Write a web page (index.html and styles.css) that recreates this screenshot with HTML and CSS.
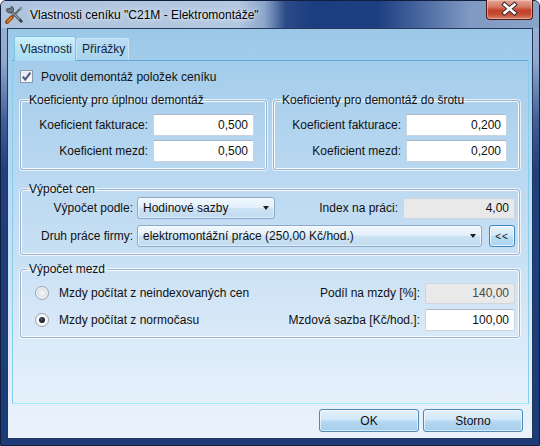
FILE: index.html
```html
<!DOCTYPE html>
<html lang="cs">
<head>
<meta charset="utf-8">
<title>Vlastnosti ceníku</title>
<link rel="stylesheet" href="styles.css">
</head>
<body>
<div class="window">
  <div class="titlebar">
    <svg class="app-icon" width="19" height="19" viewBox="0 0 19 19">
      <path d="M5.5 13.5 L16 3" stroke="#5d6a75" stroke-width="2.2" stroke-linecap="round"/>
      <path d="M15 2.5 L17 4.5" stroke="#8c98a3" stroke-width="2"/>
      <path d="M2 17 L6.8 12.2" stroke="#a04a12" stroke-width="4" stroke-linecap="round"/>
      <path d="M2.6 16.4 L6.4 12.6" stroke="#e08a3a" stroke-width="1.4" stroke-linecap="round"/>
      <path d="M4.5 4.5 L15.5 15.5" stroke="#4e5963" stroke-width="2.6" stroke-linecap="round"/>
      <path d="M4.6 4.4 L15.2 15" stroke="#b9c2ca" stroke-width="1" stroke-linecap="round"/>
      <path d="M1.5 4 A3.6 3.6 0 1 0 6.5 1.2 L5 3.8 L3.6 3.4 Z" fill="#6b7682" stroke="#3c444c" stroke-width="0.8"/>
      <path d="M13.6 15.4 L15.4 13.6 L18 16.2 L16.2 18 Z" fill="#39424a"/>
    </svg>
    <span class="title">Vlastnosti ceníku "C21M - Elektromontáže"</span>
    <div class="close">
      <svg width="47" height="20" viewBox="0 0 47 20">
        <path d="M18.5 5.5 L28.5 14 M28.5 5.5 L18.5 14" stroke="#3a2a2a" stroke-width="4.6" stroke-linecap="square"/>
        <path d="M18.5 5.5 L28.5 14 M28.5 5.5 L18.5 14" stroke="#ffffff" stroke-width="2.6" stroke-linecap="square"/>
      </svg>
    </div>
  </div>

  <div class="client">
    <div class="tabs">
      <div class="tab active">Vlastnosti</div>
      <div class="tab">Přirážky</div>
    </div>

    <div class="panel">
      <div class="check-row">
        <span class="checkbox">
          <svg width="11" height="11" viewBox="0 0 11 11">
            <path d="M1.8 5.6 L4.2 8.6 L9.4 1.6" fill="none" stroke="#4b5d7e" stroke-width="2.1"/>
          </svg>
        </span>
        <span>Povolit demontáž položek ceníku</span>
      </div>

      <div class="coef-row">
        <fieldset class="group coef">
          <legend>Koeficienty pro úplnou demontáž</legend>
          <div class="form-grid">
            <span class="lbl">Koeficient fakturace:</span><span class="input">0,500</span>
            <span class="lbl">Koeficient mezd:</span><span class="input">0,500</span>
          </div>
        </fieldset>
        <fieldset class="group coef">
          <legend>Koeficienty pro demontáž do šrotu</legend>
          <div class="form-grid">
            <span class="lbl">Koeficient fakturace:</span><span class="input">0,200</span>
            <span class="lbl">Koeficient mezd:</span><span class="input">0,200</span>
          </div>
        </fieldset>
      </div>

      <fieldset class="group cen">
        <legend>Výpočet cen</legend>
        <div class="cen-row">
          <span class="lbl cen-lbl">Výpočet podle:</span>
          <div class="combo short"><span>Hodinové sazby</span><span class="arrow"></span></div>
          <span class="lbl grow">Index na práci:</span>
          <span class="input disabled index">4,00</span>
        </div>
        <div class="cen-row">
          <span class="lbl cen-lbl">Druh práce firmy:</span>
          <div class="combo long"><span>elektromontážní práce (250,00 Kč/hod.)</span><span class="arrow"></span></div>
          <div class="small-btn">&lt;&lt;</div>
        </div>
      </fieldset>

      <fieldset class="group mezd">
        <legend>Výpočet mezd</legend>
        <div class="mezd-body">
          <div class="radios">
            <div class="radio-row"><span class="radio"></span><span>Mzdy počítat z neindexovaných cen</span></div>
            <div class="radio-row"><span class="radio checked"></span><span>Mzdy počítat z normočasu</span></div>
          </div>
          <div class="mezd-grid">
            <span class="lbl">Podíl na mzdy [%]:</span><span class="input disabled gray">140,00</span>
            <span class="lbl">Mzdová sazba [Kč/hod.]:</span><span class="input">100,00</span>
          </div>
        </div>
      </fieldset>
    </div>

    <div class="buttons">
      <div class="btn">OK</div>
      <div class="btn">Storno</div>
    </div>
  </div>
</div>
</body>
</html>
```

FILE: styles.css
```css
* { box-sizing: border-box; }

html, body {
  margin: 0;
  padding: 0;
  width: 540px;
  height: 446px;
  overflow: hidden;
  background: #ffffff;
}

body {
  font-family: "Liberation Sans", Arial, sans-serif;
  font-size: 12px;
  color: #111;
}

.window {
  width: 540px;
  height: 446px;
  display: flex;
  flex-direction: column;
  border: 1px solid #0f1f3d;
  border-radius: 6px 6px 0 0;
  background: linear-gradient(180deg, #9fb7d6 0px, #8ea9cf 60px, #3f5f98 120px, #1f3f7e 170px, #1d3b79 100%);
}

.titlebar {
  height: 27px;
  display: flex;
  align-items: flex-start;
  padding-left: 4px;
  border-radius: 5px 5px 0 0;
  background: linear-gradient(90deg, #aec4de 0%, #b4c8e0 44%, #8ca6cb 49%, #2a4a88 53%, #1c3d7f 58%, #1d3e80 70%, #4f6da4 79%, #7f99c2 87%, #8aa3c8 100%);
}

.app-icon {
  margin-top: 4px;
  flex: none;
}

.title {
  margin-left: 6px;
  margin-top: 7px;
  font-size: 12px;
  color: #000;
  white-space: nowrap;
  text-shadow: 0 0 6px #e6eef7, 0 0 3px #e6eef7;
}

.close {
  margin-left: auto;
  margin-right: 6px;
  margin-top: -1px;
  width: 47px;
  height: 20px;
  border: 1px solid #4b1a14;
  border-top: none;
  border-radius: 0 0 4px 4px;
  background: linear-gradient(180deg, #e4a899 0%, #d57a66 35%, #c2422a 55%, #c54b33 75%, #d9806a 100%);
  box-shadow: inset 0 0 0 1px rgba(255, 210, 200, 0.5);
}
.close svg { display: block; margin-top: -1px; margin-left: -1px; }

.client {
  flex: 1;
  margin: 0 6px 6px 6px;
  border: 1px solid #25385a;
  background: linear-gradient(180deg, #9cc8e8 0%, #aed2ee 20%, #c8e0f4 55%, #e2eefa 85%, #eaf3fc 100%);
  padding: 7px 3px 6px 4px;
  display: flex;
  flex-direction: column;
}

.tabs {
  height: 24px;
  display: flex;
  align-items: flex-end;
  padding-left: 2px;
}

.tab {
  position: relative;
  height: 22px;
  line-height: 20px;
  padding: 0 5px;
  color: #10253f;
  border: 1px solid #c9e4f4;
  border-bottom: none;
  border-radius: 2px 2px 0 0;
  background: linear-gradient(180deg, #b9dcf3 0%, #a8d2ee 100%);
  width: 53px;
}

.tab.active {
  height: 25px;
  line-height: 24px;
  width: 62px;
  margin-bottom: -1px;
  z-index: 1;
  border-color: #7bc1e8;
  background: linear-gradient(180deg, #d1f0fc 0%, #b9e6f8 40%, #a9dcf2 100%);
}

.panel {
  height: 344px;
  width: 517px;
  border: 1px solid #8fd8f4;
  border-top-color: #5ea9dc;
  border-left-color: #84cdee;
  border-right-color: #84cdee;
  border-bottom-color: #a2eef9;
  padding: 9px 8px 0 7px;
  display: flex;
  flex-direction: column;
}

.check-row {
  height: 14px;
  display: flex;
  align-items: center;
  gap: 8px;
  line-height: 14px;
}

.checkbox {
  width: 13px;
  height: 13px;
  border: 1px solid #8b97a6;
  background: linear-gradient(135deg, #dfe4ea 0%, #f4f6f8 60%, #ffffff 100%);
  display: flex;
  align-items: center;
  justify-content: center;
  box-shadow: inset 0 0 0 1px #f0f3f6;
  margin-top: -1px;
}
.checkbox svg { display: block; }

.group {
  margin: 0;
  padding: 0;
  min-width: 0;
  border: 1px solid #9db2d0;
  border-radius: 3px;
  box-shadow: inset 0 0 0 1px #f6fbff, 0 0 0 1px rgba(255, 255, 255, 0.7);
}

.group legend {
  margin-left: 6px;
  padding: 0 2px;
  line-height: 14px;
  color: #111;
}

.coef-row {
  margin-top: 9px;
  display: flex;
  gap: 6px;
}

.coef {
  width: 247px;
  padding: 7px 12px 7px 0;
}

.form-grid {
  display: grid;
  grid-template-columns: 1fr 101px;
  grid-auto-rows: 22px;
  row-gap: 4px;
  column-gap: 5px;
  align-items: center;
}

.lbl {
  text-align: right;
  white-space: nowrap;
  color: #111;
}

.input {
  height: 22px;
  line-height: 20px;
  background: #ffffff;
  border: 1px solid #c8d4e0;
  border-top-color: #aab7c6;
  border-radius: 2px;
  text-align: right;
  padding-right: 5px;
  color: #111;
}

.input.disabled {
  background: #e9e9e9;
  border-color: #cdd5de;
  height: 21px;
  line-height: 19px;
}
.input.gray { color: #4a4a4a; }

.cen {
  margin-top: 12px;
  padding: 1px 4px 7px 0;
}

.cen-row {
  display: flex;
  align-items: center;
  height: 22px;
}
.cen-row + .cen-row { margin-top: 6px; }

.cen-lbl {
  width: 112px;
  margin-right: 4px;
}

.grow {
  flex: 1;
  margin-right: 5px;
}

.index { width: 112px; }

.combo {
  height: 22px;
  border: 1px solid #8aa9c8;
  border-radius: 3px;
  background: linear-gradient(180deg, #f1f8fd 0%, #e3f0fa 46%, #cde3f4 52%, #bfdaef 100%);
  box-shadow: inset 0 0 0 1px rgba(255, 255, 255, 0.55);
  display: flex;
  align-items: center;
  justify-content: space-between;
  padding-left: 5px;
  padding-right: 5px;
  white-space: nowrap;
  color: #111;
}
.combo.short { width: 138px; }
.combo.long { flex: 1; margin-right: 7px; }

.arrow {
  width: 0;
  height: 0;
  border-left: 3.5px solid transparent;
  border-right: 3.5px solid transparent;
  border-top: 4px solid #1f1f1f;
}

.small-btn {
  width: 26px;
  height: 22px;
  border: 1px solid #3f86bb;
  border-radius: 3px;
  background: linear-gradient(180deg, #e6f3fc 0%, #d3eaf9 46%, #bcdff6 52%, #a9d3f1 100%);
  box-shadow: inset 0 0 0 1px rgba(255, 255, 255, 0.7);
  display: flex;
  align-items: center;
  justify-content: center;
  font-size: 10px;
  letter-spacing: 1px;
  color: #111;
}

.mezd {
  margin-top: 7px;
  padding: 6px 4px 6px 0;
}

.mezd-body {
  display: flex;
  justify-content: space-between;
}

.radios {
  display: flex;
  flex-direction: column;
  gap: 5px;
  padding-left: 14px;
}

.radio-row {
  height: 22px;
  display: flex;
  align-items: center;
  gap: 10px;
}

.radio {
  width: 14px;
  height: 14px;
  border-radius: 50%;
  border: 1px solid #9aa3ad;
  background: radial-gradient(circle at 50% 50%, #f3f6f9 0%, #dce3ea 60%, #c9d2dc 100%);
  box-shadow: inset 0 0 0 1px #f4f6f8;
  display: flex;
  align-items: center;
  justify-content: center;
}

.radio.checked {
  background: radial-gradient(circle at 50% 50%, #ffffff 0%, #eef1f4 100%);
}
.radio.checked::after {
  content: "";
  width: 6px;
  height: 6px;
  border-radius: 50%;
  background: radial-gradient(circle at 40% 35%, #4a5566 0%, #14181f 70%);
}

.mezd-grid {
  display: grid;
  grid-template-columns: auto 90px;
  grid-auto-rows: 22px;
  row-gap: 5px;
  column-gap: 5px;
  align-items: center;
}

.buttons {
  margin-top: 5px;
  display: flex;
  justify-content: flex-end;
  gap: 4px;
  padding-right: 6px;
}

.btn {
  width: 100px;
  height: 23px;
  border: 1px solid #4f89b8;
  border-radius: 3px;
  background: linear-gradient(180deg, #e3f0fb 0%, #d2e8f8 45%, #b7d9f2 52%, #a3cdec 100%);
  box-shadow: inset 0 0 0 1px rgba(255, 255, 255, 0.6);
  display: flex;
  align-items: center;
  justify-content: center;
  color: #111;
}
```
